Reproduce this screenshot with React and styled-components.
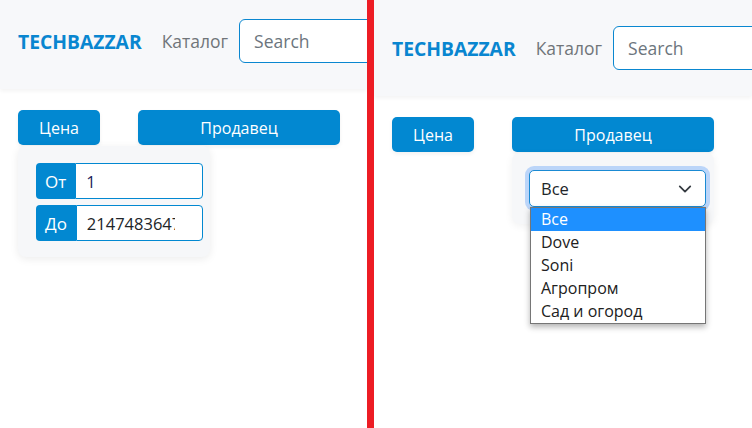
import React from "react";
import styled, { createGlobalStyle } from "styled-components";

const GlobalStyle = createGlobalStyle`
  body {
    margin: 0;
    background: #fff;
    font-family: "Open Sans", "Noto Sans", sans-serif;
  }
  * {
    box-sizing: border-box;
  }
`;

const sellers = ["Все", "Dove", "Soni", "Агропром", "Сад и огород"];

function ChevronDown() {
  return (
    <svg width="14" height="14" viewBox="0 0 16 16" fill="none">
      <path
        d="m2 5 6 6 6-6"
        stroke="#343a40"
        strokeWidth="2"
        strokeLinecap="round"
        strokeLinejoin="round"
      />
    </svg>
  );
}

function Shop({ open, top }) {
  return (
    <>
      <Header top={top}>
        <Brand>TECHBAZZAR</Brand>
        <NavLink>Каталог</NavLink>
        <Search placeholder="Search" />
      </Header>
      <Filters>
        <Filter>
          <FilterButton width={82}>Цена</FilterButton>
          {open === "price" && (
            <PricePanel>
              <InputGroup>
                <Addon>От</Addon>
                <Field defaultValue="1" dark />
              </InputGroup>
              <InputGroup>
                <Addon>До</Addon>
                <Field defaultValue="2147483647" />
              </InputGroup>
            </PricePanel>
          )}
        </Filter>
        <Filter>
          <FilterButton width={202}>Продавец</FilterButton>
          {open === "seller" && (
            <SellerPanel>
              <SelectWrap>
                <SelectBox>
                  <span>Все</span>
                  <ChevronDown />
                </SelectBox>
                <OptionList>
                  {sellers.map((s, i) => (
                    <Option key={s} selected={i === 0}>
                      {s}
                    </Option>
                  ))}
                </OptionList>
              </SelectWrap>
            </SellerPanel>
          )}
        </Filter>
      </Filters>
    </>
  );
}

export default function App() {
  return (
    <>
      <GlobalStyle />
      <Frame>
        <Pane>
          <Shop open="price" top={19} />
        </Pane>
        <Divider />
        <Pane grow>
          <Shop open="seller" top={26} />
        </Pane>
      </Frame>
    </>
  );
}

const Frame = styled.div`
  display: flex;
  height: 428px;
  overflow: hidden;
`;

const Pane = styled.div`
  ${(props) => (props.grow ? "flex: 1;" : "width: 367px;")}
  min-width: 0;
  overflow: hidden;
`;

const Divider = styled.div`
  width: 7px;
  background: #ed1c24;
`;

const Header = styled.div`
  display: flex;
  align-items: center;
  padding: ${(props) => props.top}px 0 26px 18px;
  background: #f7f8fa;
  box-shadow: 0 2px 4px rgba(0, 0, 0, 0.05);
  white-space: nowrap;
`;

const Brand = styled.div`
  font-size: 19.3px;
  font-weight: 700;
  color: #0986d0;
`;

const NavLink = styled.div`
  margin-left: 20px;
  font-size: 17.5px;
  color: #707579;
`;

const Search = styled.input`
  flex: none;
  margin-left: 11px;
  width: 240px;
  height: 44px;
  padding: 0 14px;
  border: 1px solid #0a87d0;
  border-radius: 6px;
  background: #fff;
  font-family: inherit;
  font-size: 17.5px;
  outline: none;
  &::placeholder {
    color: #6c757d;
  }
`;

const Filters = styled.div`
  display: flex;
  gap: 38px;
  margin-top: 21px;
  padding-left: 18px;
`;

const Filter = styled.div`
  position: relative;
`;

const FilterButton = styled.button`
  width: ${(props) => props.width}px;
  height: 35px;
  border: none;
  border-radius: 5px;
  background: #0288d1;
  color: #fff;
  font-family: inherit;
  font-size: 16px;
  box-shadow: 0 2px 4px rgba(0, 0, 0, 0.06);
`;

const PricePanel = styled.div`
  position: absolute;
  top: calc(100% + 1px);
  left: 0;
  width: 192px;
  padding: 17px 7px 16px 18px;
  display: flex;
  flex-direction: column;
  gap: 6px;
  background: #f6f7f9;
  border-radius: 8px;
  box-shadow: 0 2px 8px rgba(0, 0, 0, 0.08);
  z-index: 2;
`;

const InputGroup = styled.div`
  display: flex;
  height: 36px;
`;

const Addon = styled.div`
  display: flex;
  align-items: center;
  padding: 0 9px;
  background: #0288d1;
  color: #fff;
  font-size: 17px;
  border-radius: 4px 0 0 4px;
`;

const Field = styled.input`
  flex: 1;
  min-width: 0;
  padding: 0 27px 0 10px;
  border: 1px solid #0288d1;
  border-radius: 0 4px 4px 0;
  background: #fff;
  color: ${(props) => (props.dark ? "#1c1c5a" : "#212529")};
  font-family: inherit;
  font-size: 16.5px;
  outline: none;
`;

const SellerPanel = styled.div`
  position: absolute;
  top: calc(100% + 1px);
  left: 0;
  width: 202px;
  padding: 17px 8px 17px 17px;
  background: #f6f7f9;
  border-radius: 8px;
  box-shadow: 0 2px 8px rgba(0, 0, 0, 0.06);
  z-index: 2;
`;

const SelectWrap = styled.div`
  position: relative;
`;

const SelectBox = styled.div`
  display: flex;
  align-items: center;
  justify-content: space-between;
  height: 37px;
  padding: 0 13px 0 11px;
  border: 1px solid #1a8ad3;
  border-radius: 5px;
  background: #fff;
  box-shadow: 0 0 0 4px rgba(13, 110, 253, 0.25);
  color: #212529;
  font-size: 16.5px;
`;

const OptionList = styled.div`
  position: absolute;
  top: 100%;
  left: 1px;
  width: 176px;
  border: 1px solid #767676;
  background: #fff;
  box-shadow: 0 3px 6px rgba(0, 0, 0, 0.3);
  z-index: 3;
`;

const Option = styled.div`
  height: 23px;
  line-height: 23px;
  padding-left: 10px;
  font-size: 16px;
  color: ${(props) => (props.selected ? "#fff" : "#212121")};
  background: ${(props) => (props.selected ? "#1e90ff" : "#fff")};
`;
